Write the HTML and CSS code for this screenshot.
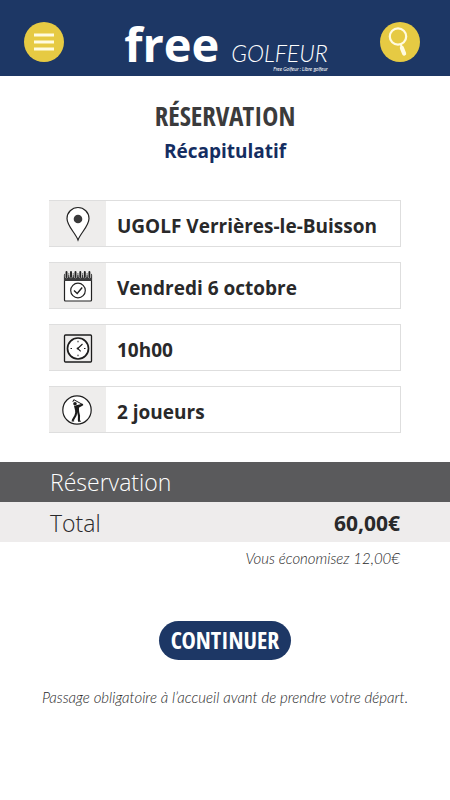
FILE: index.html
```html
<!DOCTYPE html>
<html lang="fr">
<head>
<meta charset="utf-8">
<meta name="viewport" content="width=device-width, initial-scale=1">
<title>Free Golfeur – Réservation</title>
<link rel="stylesheet" href="styles.css">
</head>
<body>
<header class="topbar">
  <button class="round" type="button" aria-label="Menu">
    <svg viewBox="0 0 40 40"><path d="M10 13h20M10 20h20M10 27h20" stroke="#fffbe0" stroke-width="2.8" fill="none"/></svg>
  </button>
  <a class="brand" href="#">
    <span class="brand-free">free</span>
    <span class="brand-side">
      <span class="brand-golfeur">GOLFEUR</span>
      <span class="brand-tag">Free Golfeur : Libre golfeur</span>
    </span>
  </a>
  <button class="round" type="button" aria-label="Rechercher">
    <svg viewBox="0 0 40 40" fill="none" stroke="#fffbe0"><circle cx="18" cy="14.500" r="8.200" stroke-width="2.200"/><path d="M20.800 22.500l1 3" stroke-width="2"/><path d="M21.900 26l2.200 5.500" stroke-width="4.200" stroke-linecap="round"/></svg>
  </button>
</header>
<main>
  <h1>RÉSERVATION</h1>
  <h2>Récapitulatif</h2>
  <ul class="details">
    <li>
      <span class="icon"><svg viewBox="0 0 32 36"><path d="M16 34C13.500 27 5 20 5 12.500a11 11 0 0 1 22 0C27 20 18.500 27 16 34z" fill="#fff" stroke="#222" stroke-width="1.200"/><circle cx="16" cy="13" r="4.300" fill="#3a3a3b"/></svg></span>
      <span class="value">UGOLF Verrières-le-Buisson</span>
    </li>
    <li>
      <span class="icon"><svg viewBox="0 0 32 36"><rect x="2.500" y="6" width="27" height="27" rx="1" fill="#fff" stroke="#222" stroke-width="1.200"/><path d="M2 7h28v6H2z" fill="#3a3a3b"/><path d="M4.500 4v4.500M9 4v4.500M13.500 4v4.500M18.300 4v4.500M22.800 4v4.500M27.400 4v4.500" stroke="#eeedec" stroke-width="3.400" stroke-linecap="round"/><path d="M4.500 4v5M9 4v5M13.500 4v5M18.300 4v5M22.800 4v5M27.400 4v5" stroke="#222" stroke-width="1.900" stroke-linecap="round"/><circle cx="16" cy="22.500" r="7.300" fill="none" stroke="#222" stroke-width="1.200"/><path d="M12 22.500l3.200 3 5-6" fill="none" stroke="#222" stroke-width="1.400"/></svg></span>
      <span class="value">Vendredi 6 octobre</span>
    </li>
    <li>
      <span class="icon"><svg viewBox="0 0 32 36" fill="none" stroke="#1c1c1c"><rect x="2.500" y="5" width="27" height="27" rx="1" stroke-width="1.300"/><circle cx="16" cy="18.500" r="10.500" fill="#fff" stroke-width="1.700"/><path d="M20.500 14l-4.800 4.500 3 2.800" stroke-width="1.100"/><path d="M16 10.800v1.500M16 24.700v1.500M8.500 18.500H10M22 18.500h1.500" stroke-width="1"/><circle cx="15.600" cy="18.500" r="1" fill="#1c1c1c" stroke="none"/></svg></span>
      <span class="value">10h00</span>
    </li>
    <li>
      <span class="icon"><svg viewBox="0 0 32 36"><circle cx="15" cy="18" r="14.200" fill="#fff" stroke="#1c1c1c" stroke-width="1.200"/><g fill="none" stroke="#1c1c1c" stroke-linecap="round" stroke-linejoin="round"><path d="M11 9.500l.8-1.800 8.400 4.600" stroke-width="1"/><path d="M14.500 14l6-1.500M16 15.500l4.500-2.500" stroke-width="1.400"/><path d="M14.500 19.500l-1 4-2.600 4.500" stroke-width="2.100"/><path d="M16 19.500l1 4.200-.1 4.800" stroke-width="2.100"/><path d="M10 29h1.800M16.500 29.200h2" stroke-width="1"/></g><path d="M12 13.700l4.900.3.200 6-3.700-.1z" fill="#1c1c1c"/><circle cx="13" cy="11.700" r="1.800" fill="#1c1c1c"/></svg></span>
      <span class="value">2 joueurs</span>
    </li>
  </ul>
  <table class="totals">
    <thead><tr><th colspan="2" scope="colgroup">Réservation</th></tr></thead>
    <tbody><tr><th scope="row">Total</th><td>60,00€</td></tr></tbody>
  </table>
  <p class="saving">Vous économisez 12,00€</p>
  <button class="continue" type="button">CONTINUER</button>
  <p class="notice">Passage obligatoire à l’accueil avant de prendre votre départ.</p>
</main>
</body>
</html>
```
FILE: styles.css
```css
* { box-sizing: border-box; }
body {
  margin: 0;
  background: #fff;
  color: #29292a;
  font-family: "Open Sans", "Noto Sans", sans-serif;
}
h1, h2, p, ul { margin: 0; padding: 0; }
svg { display: block; }
button { border: 0; padding: 0; cursor: pointer; }

.topbar {
  display: flex;
  align-items: flex-end;
  justify-content: space-between;
  height: 76px;
  padding: 0 30px 14px 24px;
  background: #1d3765;
}
.round {
  width: 40px;
  height: 40px;
  border-radius: 50%;
  background: #e6ca43;
}
.round svg { width: 40px; height: 40px; }
.brand {
  display: flex;
  align-items: baseline;
  gap: 12px;
  margin-left: 8px;
  color: #fff;
  text-decoration: none;
}
.brand-free {
  font-size: 47px;
  line-height: 36px;
  font-weight: 700;
}
.brand-side {
  position: relative;
  font-family: Lato, sans-serif;
  font-style: italic;
}
.brand-golfeur {
  display: block;
  font-size: 23px;
  line-height: 18px;
  font-weight: 300;
}
.brand-tag {
  position: absolute;
  top: 100%;
  right: 0;
  font-size: 5px;
  line-height: 14px;
  white-space: nowrap;
}

h1 {
  margin-top: 24px;
  font-family: "Open Sans Condensed", "Roboto Condensed", Lato, sans-serif;
  font-size: 27px;
  line-height: 32px;
  text-align: center;
  color: #3b3b3c;
}
h2 {
  margin-top: 5px;
  font-size: 19px;
  line-height: 28px;
  text-align: center;
  color: #142d61;
}
.details {
  display: grid;
  gap: 15px;
  margin: 35px 49px 0;
  list-style: none;
}
.details li {
  display: flex;
  height: 47px;
  border: 1px solid #dedede;
  border-left: 0;
}
.icon {
  display: flex;
  align-items: center;
  justify-content: center;
  width: 57px;
  background: #eeedec;
}
.icon svg { width: 32px; height: 36px; }
.value {
  padding: 4px 0 0 11px;
  font-size: 19px;
  line-height: 42px;
  font-weight: 700;
}

.totals {
  width: 100%;
  margin-top: 29px;
  border-collapse: collapse;
}
.totals th, .totals td {
  height: 40px;
  padding: 0 50px;
  line-height: 36px;
}
.totals th {
  font-size: 23px;
  font-weight: 300;
  text-align: left;
}
.totals thead { background: #5a5a5c; color: #fff; }
.totals tbody { background: #eeecec; }
.totals tbody th, .totals tbody td { padding-top: 2px; }
.totals td {
  font-size: 21px;
  font-weight: 700;
  text-align: right;
}
.saving, .notice {
  font-family: Lato, sans-serif;
  font-size: 15px;
  line-height: 24px;
  font-weight: 300;
  font-style: italic;
}
.saving { margin: 4px 50px 0; text-align: right; }
.continue {
  display: block;
  height: 39px;
  margin: 51px auto 0;
  padding: 0 12px 2px;
  border-radius: 20px;
  background: #1d3765;
  color: #fff;
  font-family: "Open Sans Condensed", "Roboto Condensed", Lato, sans-serif;
  font-size: 24px;
  line-height: 36px;
  font-weight: 700;
}
.notice { margin-top: 25px; text-align: center; }
```
